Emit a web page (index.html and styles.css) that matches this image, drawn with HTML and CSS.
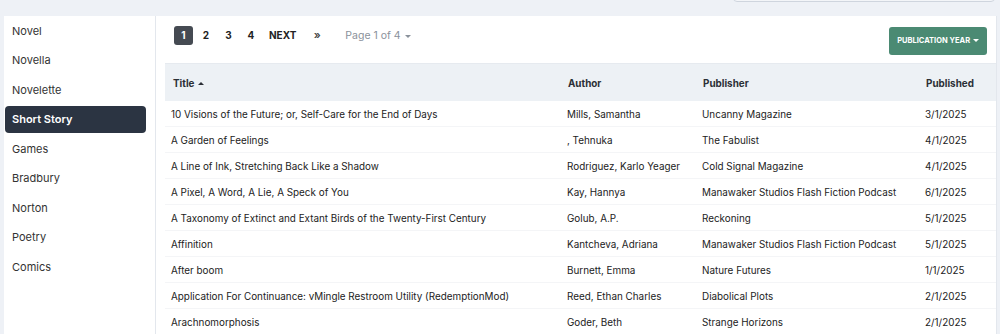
FILE: index.html
```html
<!DOCTYPE html>
<html lang="en">
<head>
    <meta charset="UTF-8">
    <title>Short Story</title>
    <link rel="stylesheet" href="styles.css">
</head>
<body>
    <div class="topbar">
        <input class="search" type="text">
    </div>
    <div class="layout">
        <nav class="sidebar">
            <a class="cat">Novel</a>
            <a class="cat">Novella</a>
            <a class="cat">Novelette</a>
            <a class="cat active">Short Story</a>
            <a class="cat">Games</a>
            <a class="cat">Bradbury</a>
            <a class="cat">Norton</a>
            <a class="cat">Poetry</a>
            <a class="cat">Comics</a>
        </nav>
        <main class="content">
            <div class="toolbar">
                <div class="pager">
                    <span class="page current">1</span>
                    <span class="page">2</span>
                    <span class="page">3</span>
                    <span class="page">4</span>
                    <span class="page next">NEXT</span>
                    <span class="page last">&raquo;</span>
                    <span class="page-of">Page 1 of 4 <span class="caret"></span></span>
                </div>
                <button class="filter">PUBLICATION YEAR <span class="caret"></span></button>
            </div>
            <table class="works">
                <colgroup>
                    <col class="c-title">
                    <col class="c-author">
                    <col class="c-pub">
                    <col>
                </colgroup>
                <thead>
                    <tr>
                        <th class="h-title">Title <span class="sort"></span></th>
                        <th>Author</th>
                        <th>Publisher</th>
                        <th>Published</th>
                    </tr>
                </thead>
                <tbody>
                    <tr><td>10 Visions of the Future; or, Self-Care for the End of Days</td><td>Mills, Samantha</td><td>Uncanny Magazine</td><td>3/1/2025</td></tr>
                    <tr><td>A Garden of Feelings</td><td>, Tehnuka</td><td>The Fabulist</td><td>4/1/2025</td></tr>
                    <tr><td>A Line of Ink, Stretching Back Like a Shadow</td><td>Rodriguez, Karlo Yeager</td><td>Cold Signal Magazine</td><td>4/1/2025</td></tr>
                    <tr><td>A Pixel, A Word, A Lie, A Speck of You</td><td>Kay, Hannya</td><td>Manawaker Studios Flash Fiction Podcast</td><td>6/1/2025</td></tr>
                    <tr><td>A Taxonomy of Extinct and Extant Birds of the Twenty-First Century</td><td>Golub, A.P.</td><td>Reckoning</td><td>5/1/2025</td></tr>
                    <tr><td>Affinition</td><td>Kantcheva, Adriana</td><td>Manawaker Studios Flash Fiction Podcast</td><td>5/1/2025</td></tr>
                    <tr><td>After boom</td><td>Burnett, Emma</td><td>Nature Futures</td><td>1/1/2025</td></tr>
                    <tr><td>Application For Continuance: vMingle Restroom Utility (RedemptionMod)</td><td>Reed, Ethan Charles</td><td>Diabolical Plots</td><td>2/1/2025</td></tr>
                    <tr><td>Arachnomorphosis</td><td>Goder, Beth</td><td>Strange Horizons</td><td>2/1/2025</td></tr>
                </tbody>
            </table>
        </main>
    </div>
</body>
</html>
```

FILE: styles.css
```css
body {
    font-family: 'Inter', 'Liberation Sans', sans-serif;
    background: #eef1f6;
    color: #212529;
    margin: 0;
}
.topbar {
    height: 16px;
    position: relative;
}
.search {
    position: absolute;
    left: 733px;
    top: -30px;
    width: 262px;
    height: 32px;
    box-sizing: border-box;
    border: 1px solid #cfd5de;
    border-radius: 4px;
    background: #f3f5f8;
}
.layout {
    display: flex;
    margin: 0 3px 0 4px;
    min-height: 330px;
}
.sidebar {
    width: 151px;
    background: #fff;
    border-right: 1px solid #e3e7ed;
    display: flex;
    flex-direction: column;
    padding-top: 1px;
}
.cat {
    display: block;
    height: 27px;
    line-height: 27px;
    margin: 0.5px 9px 2px 1px;
    padding: 0 7px;
    font-size: 11px;
    color: #333;
    border-radius: 4px;
}
.cat.active {
    background: #2b3442;
    color: #fff;
    font-weight: 600;
}
.content {
    flex: 1;
    background: #fff;
    border-right: 1px solid #e3e7ed;
    padding: 10px 0 0 9px;
}
.toolbar {
    display: flex;
    justify-content: space-between;
    align-items: flex-start;
    padding: 0 9px 0 9px;
    height: 37px;
}
.pager {
    display: flex;
    align-items: center;
    height: 19px;
    font-size: 10px;
    font-weight: 700;
    color: #222;
}
.page {
    display: inline-block;
    min-width: 19px;
    height: 19px;
    line-height: 19px;
    text-align: center;
    margin-right: 3.5px;
    border-radius: 3px;
}
.page.current {
    background: #454a52;
    color: #fff;
}
.page.next {
    padding: 0 2px;
    margin-left: 3px;
}
.page.last {
    margin-left: 6px;
    font-size: 11px;
    font-weight: 600;
    color: #444;
}
.page-of {
    margin-left: 15px;
    font-size: 10.5px;
    font-weight: 400;
    color: #8a919b;
}
.caret {
    display: inline-block;
    width: 0;
    height: 0;
    border-left: 3px solid transparent;
    border-right: 3px solid transparent;
    border-top: 3px solid currentColor;
    vertical-align: middle;
    margin-left: 1px;
}
.filter {
    width: 98px;
    height: 28px;
    margin-top: 0.5px;
    background: #4b8a73;
    color: #fff;
    border: none;
    border-radius: 3px;
    font-family: inherit;
    font-size: 7.5px;
    font-weight: 700;
    padding: 0;
}
.works {
    width: 100%;
    border-collapse: collapse;
    font-size: 9.9px;
    table-layout: fixed;
}
.c-title { width: 396px; }
.c-author { width: 135px; }
.c-pub { width: 223px; }
.works th {
    background: #edf1f5;
    height: 37px;
    text-align: left;
    font-weight: 700;
    color: #2b2f36;
    padding: 0 7px;
    border-top: 1px solid #e6eaef;
}
.works th.h-title { padding-left: 8px; }
.works td {
    height: 25px;
    padding: 0 6px;
    color: #222;
    border-bottom: 1px solid #f4f5f7;
    white-space: nowrap;
}
.sort {
    display: inline-block;
    width: 0;
    height: 0;
    border-left: 3px solid transparent;
    border-right: 3px solid transparent;
    border-bottom: 3px solid currentColor;
    vertical-align: middle;
    margin-left: 1px;
}
```
